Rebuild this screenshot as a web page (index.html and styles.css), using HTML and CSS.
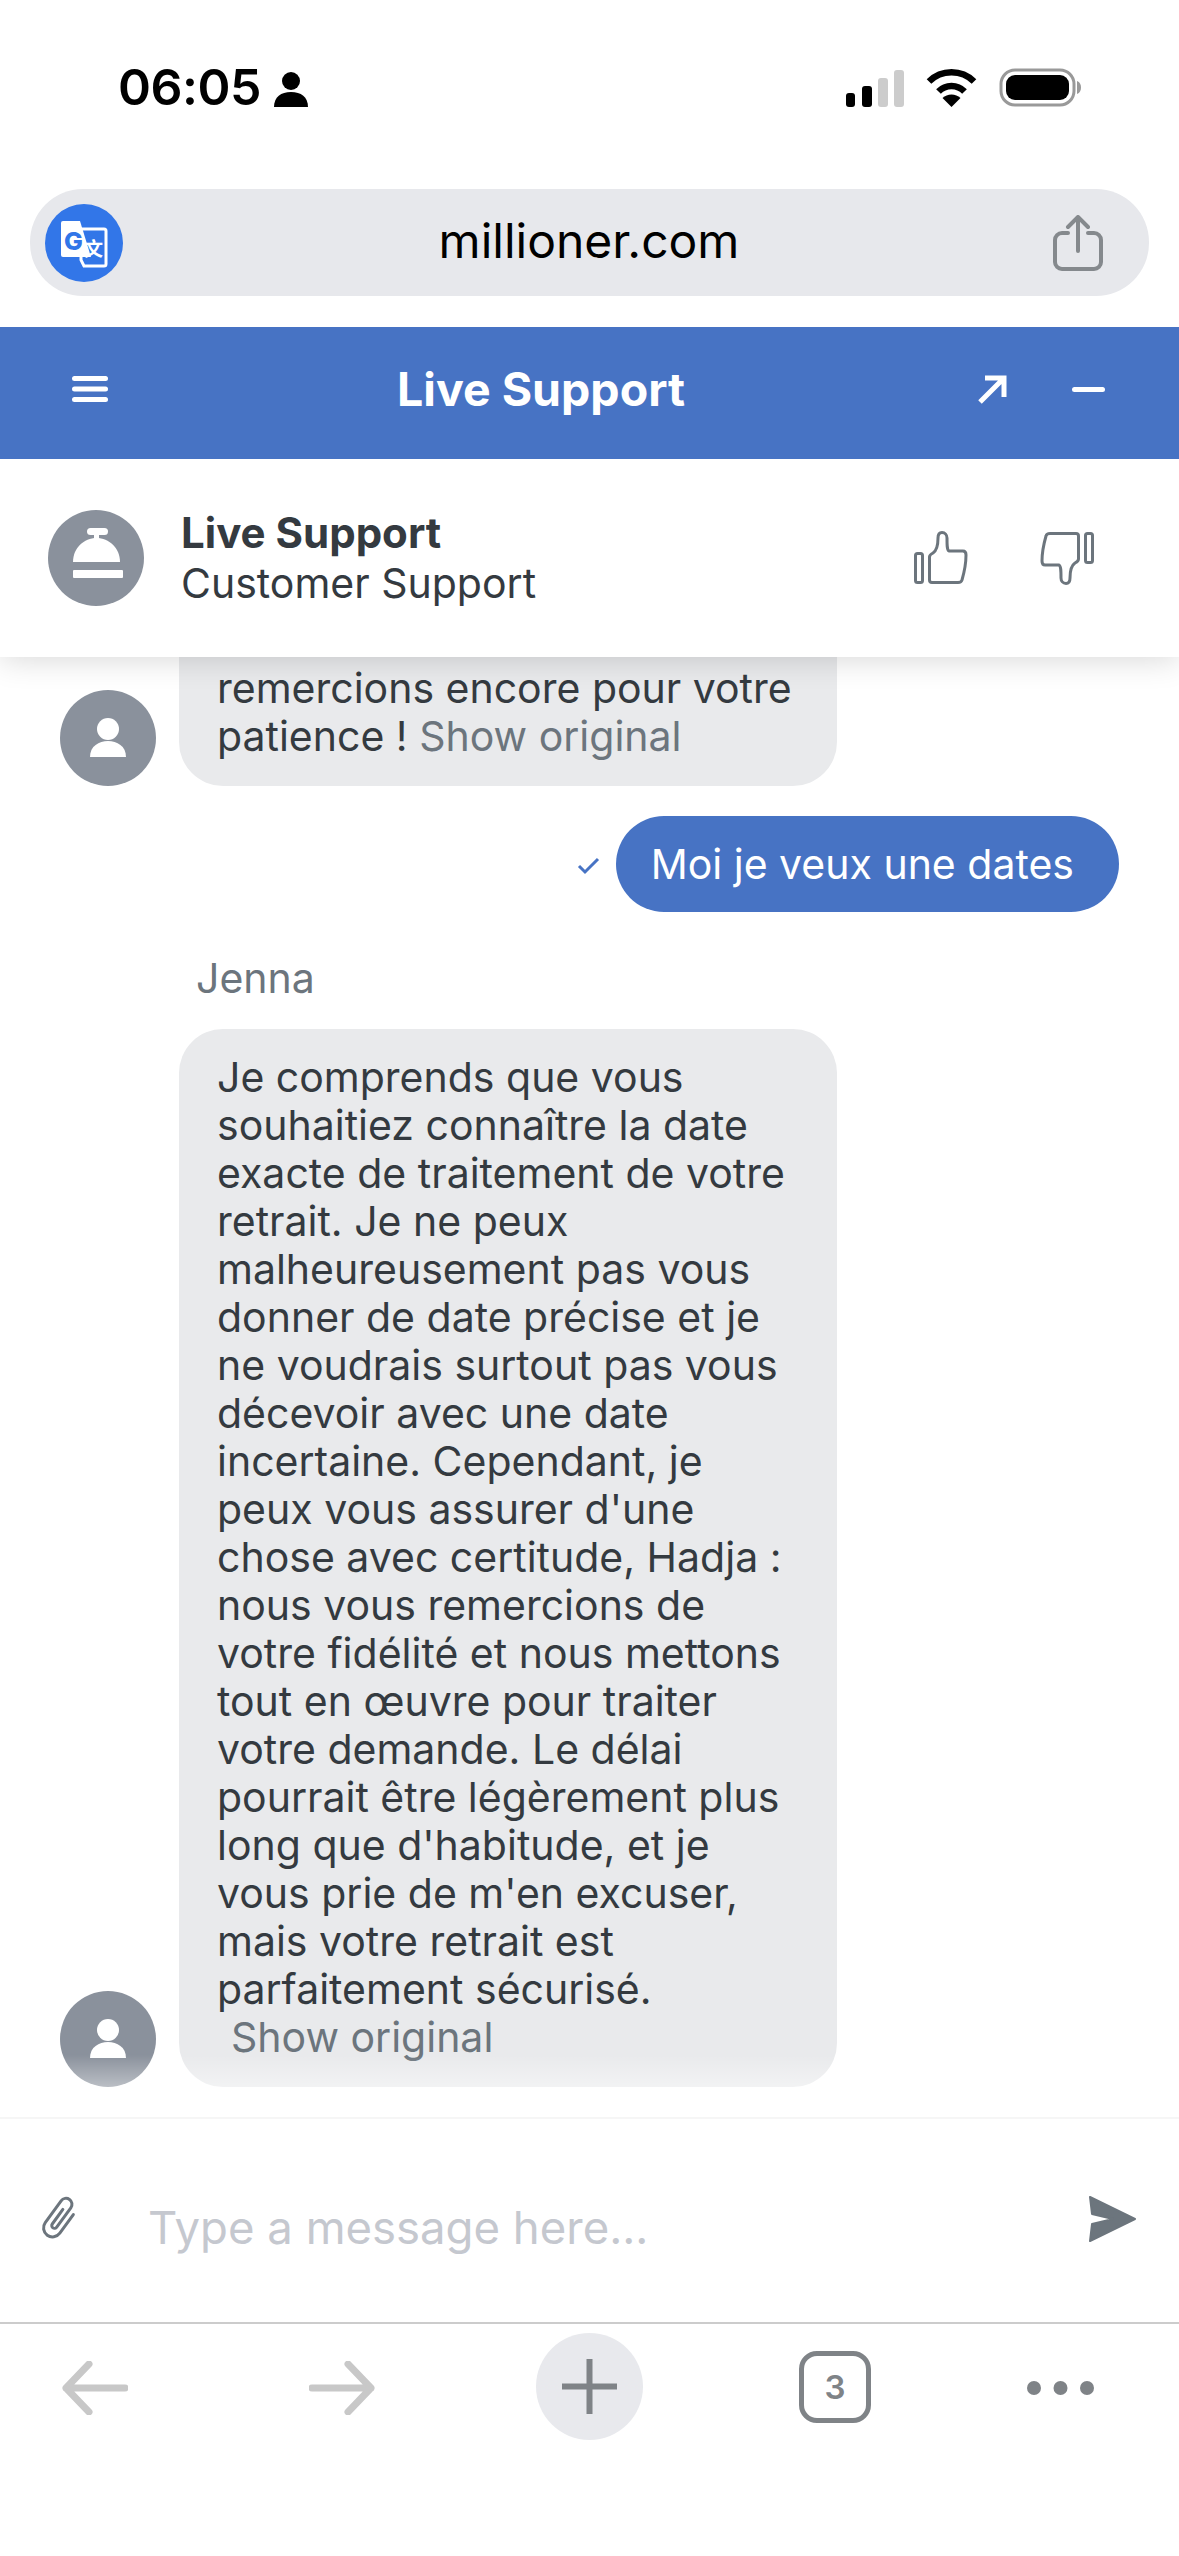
FILE: index.html
```html
<!doctype html>
<html lang="fr">
<head>
	<meta charset="UTF-8" />
	<title>Live Support - millioner.com</title>
	<link rel="stylesheet" href="styles.css">
</head>
<body>
<div class="page">

	<div class="status">
		<span class="time">06:05</span>
		<svg class="status-person" width="34" height="35" viewBox="0 0 34 35"><circle cx="17" cy="9" r="9"/><path d="M0 35c0-10 7-15 17-15s17 5 17 15z"/></svg>
		<svg class="signal" width="58" height="37" viewBox="0 0 58 37">
			<rect x="0" y="23" width="9" height="14" rx="3"/>
			<rect x="16" y="16" width="10" height="21" rx="3"/>
			<rect class="off" x="32" y="8" width="10" height="29" rx="3"/>
			<rect class="off" x="48" y="0" width="10" height="37" rx="3"/>
		</svg>
		<svg class="wifi" width="51" height="38" viewBox="0 0 51 38">
			<path class="arc" d="M3 12.500A32 32 0 0 1 48 12.500"/>
			<path class="arc" d="M12.500 22.500A18 18 0 0 1 38.500 22.500"/>
			<path d="M25.500 38L16.500 29A13 13 0 0 1 34.500 29z"/>
		</svg>
		<svg class="battery" width="82" height="39" viewBox="0 0 82 39">
			<rect class="shell" x="2" y="2" width="73" height="35" rx="14"/>
			<rect x="7" y="7" width="63" height="25" rx="9"/>
			<path class="nub" d="M78 13c3 1 4 4 4 6.500s-1 5.500-4 6.500z"/>
		</svg>
	</div>

	<div class="address">
		<div class="translate">
			<svg width="78" height="78" viewBox="0 0 78 78">
				<path class="doc-back" d="M36 25h23a2 2 0 0 1 2 2v33a2 2 0 0 1-2 2H39l-3-6z"/>
				<path class="doc-front" d="M18 17h17l11 36H18a2 2 0 0 1-2-2V19a2 2 0 0 1 2-2z"/>
				<text class="g-letter" x="19" y="46">G</text>
				<text class="wen-letter" x="39" y="52">文</text>
			</svg>
		</div>
		<span class="url">millioner.com</span>
		<svg class="share" width="50" height="56" viewBox="0 0 50 56">
			<path d="M15 18H9a7 7 0 0 0-7 7v22a7 7 0 0 0 7 7h32a7 7 0 0 0 7-7V25a7 7 0 0 0-7-7h-6"/>
			<path d="M25 36V3M15 12l10-10 10 10"/>
		</svg>
	</div>

	<div class="topbar">
		<svg class="burger" width="36" height="26" viewBox="0 0 36 26"><rect y="0" width="36" height="5" rx="2.500"/><rect y="10.500" width="36" height="5" rx="2.500"/><rect y="21" width="36" height="5" rx="2.500"/></svg>
		<span class="topbar-title">Live Support</span>
		<svg class="expand" width="30" height="30" viewBox="0 0 30 30"><path d="M3 27L27 3M8 3h19v19"/></svg>
		<svg class="minus" width="33" height="5" viewBox="0 0 33 5"><rect width="33" height="5" rx="2.500"/></svg>
	</div>

	<div class="contact">
		<div class="avatar">
			<svg width="96" height="96" viewBox="0 0 96 96">
				<rect x="39" y="18" width="21" height="7" rx="3.500"/>
				<rect x="46" y="24" width="5" height="6"/>
				<path d="M25 52C25 38 36 28 48.500 28S72 38 72 52z"/>
				<rect x="25" y="60" width="50" height="8" rx="1"/>
			</svg>
		</div>
		<div class="contact-text">
			<div class="contact-name">Live Support</div>
			<div class="contact-role">Customer Support</div>
		</div>
		<svg class="thumb" width="54" height="54" viewBox="0 0 54 54">
			<rect x="1.500" y="22.500" width="7" height="29" rx="2"/>
			<path d="M15.500 26C15.500 24 17 23 19 22C22 20 24 14 24 7C24 3 26 1.500 28 1.500C31 1.500 33 4 33 7C33 14 33 19 35 20L49 20C51 20 52 22 52 24C52 32 50 42 48 49C47.500 51 46 51.500 44 51.500L18 51.500C16 51.500 15.500 50.500 15.500 49z"/>
		</svg>
		<svg class="thumb thumb-down" width="54" height="54" viewBox="0 0 54 54">
			<g transform="rotate(180 27 27)">
				<rect x="1.500" y="22.500" width="7" height="29" rx="2"/>
				<path d="M15.500 26C15.500 24 17 23 19 22C22 20 24 14 24 7C24 3 26 1.500 28 1.500C31 1.500 33 4 33 7C33 14 33 19 35 20L49 20C51 20 52 22 52 24C52 32 50 42 48 49C47.500 51 46 51.500 44 51.500L18 51.500C16 51.500 15.500 50.500 15.500 49z"/>
			</g>
		</svg>
	</div>

	<div class="chat">
		<div class="row">
			<div class="avatar avatar-user">
				<svg width="96" height="96" viewBox="0 0 96 96"><circle cx="48" cy="39" r="11"/><path d="M30 67C30 56 39 51 48 51S66 56 66 67z"/></svg>
			</div>
			<div class="bubble bubble-clipped">
				remercions encore pour votre<br>
				patience ! <span class="original">Show original</span>
			</div>
		</div>

		<div class="row-me">
			<svg class="tick" width="23" height="18" viewBox="0 0 23 18"><path d="M2 9l6 6L21 2"/></svg>
			<div class="bubble-me">Moi je veux une dates</div>
		</div>

		<div class="sender">Jenna</div>

		<div class="row">
			<div class="avatar avatar-user">
				<svg width="96" height="96" viewBox="0 0 96 96"><circle cx="48" cy="39" r="11"/><path d="M30 67C30 56 39 51 48 51S66 56 66 67z"/></svg>
			</div>
			<div class="bubble">
				Je comprends que vous<br>
				souhaitiez connaître la date<br>
				exacte de traitement de votre<br>
				retrait. Je ne peux<br>
				malheureusement pas vous<br>
				donner de date précise et je<br>
				ne voudrais surtout pas vous<br>
				décevoir avec une date<br>
				incertaine. Cependant, je<br>
				peux vous assurer d'une<br>
				chose avec certitude, Hadja :<br>
				nous vous remercions de<br>
				votre fidélité et nous mettons<br>
				tout en œuvre pour traiter<br>
				votre demande. Le délai<br>
				pourrait être légèrement plus<br>
				long que d'habitude, et je<br>
				vous prie de m'en excuser,<br>
				mais votre retrait est<br>
				parfaitement sécurisé.<br>
				<span class="original original-block">Show original</span>
			</div>
		</div>
	</div>

	<div class="composer">
		<svg class="clip" width="42" height="46" viewBox="0 0 42 46">
			<g transform="rotate(36 21 23)">
				<path d="M30 11V34A9 9 0 0 1 12 34V7A6 6 0 0 1 24 7V31A2.700 2.700 0 0 1 18.500 31V13"/>
			</g>
		</svg>
		<span class="placeholder">Type a message here...</span>
		<svg class="send" width="49" height="48" viewBox="0 0 49 48"><path d="M2 2L47 24L2 46L4 29L25 24L4 19z"/></svg>
	</div>

	<div class="toolbar">
		<svg class="nav nav-back" width="66" height="54" viewBox="0 0 66 54"><path d="M63 27H4M27 3L4 27l23 24"/></svg>
		<svg class="nav nav-forward" width="66" height="54" viewBox="0 0 66 54"><path d="M3 27h59M39 3l23 24-23 24"/></svg>
		<div class="new-tab">
			<svg width="55" height="55" viewBox="0 0 55 55"><path d="M0 27.500h55M27.500 0v55"/></svg>
		</div>
		<div class="tabs">3</div>
		<svg class="more" width="67" height="14" viewBox="0 0 67 14"><circle cx="7" cy="7" r="7"/><circle cx="33.500" cy="7" r="7"/><circle cx="60" cy="7" r="7"/></svg>
	</div>

</div>
</body>
</html>
```
FILE: styles.css
```css
body{
	margin: 0;
	padding: 0;
	background: #fff;
	font-family: Inter, "Noto Sans", sans-serif;
	color: #343a40;
}
.page{
	display: flex;
	flex-direction: column;
	height: 2556px;
	overflow: hidden;
}

/* phone status bar */
.status{
	display: flex;
	align-items: center;
	height: 39px;
	margin-top: 68px;
	padding: 0 98px 0 118px;
	flex: none;
}
.time{
	font-size: 50px;
	font-weight: 600;
	color: #000;
	line-height: 39px;
	letter-spacing: -0.5px;
}
.status-person{
	margin-left: 13px;
	margin-top: 3px;
}
.signal{
	margin-left: auto;
	margin-top: 1px;
}
.signal .off{fill: #ccc;}
.wifi{margin-left: 22px;}
.wifi .arc{
	fill: none;
	stroke: #000;
	stroke-width: 6.5;
}
.battery{margin-left: 22px;}
.battery .shell{
	fill: none;
	stroke: #999;
	stroke-width: 3;
}
.battery .nub{fill: #999;}

/* browser address bar */
.address{
	display: flex;
	align-items: center;
	height: 107px;
	margin: 82px 30px 31px 30px;
	padding: 0 46px 0 15px;
	background: #e7e8ec;
	border-radius: 53px;
	flex: none;
}
.translate{
	width: 78px;
	height: 78px;
	background: #3276e8;
	border-radius: 50%;
}
.translate svg{display: block;}
.doc-back{
	fill: none;
	stroke: #fff;
	stroke-width: 3;
}
.doc-front{fill: #fff;}
.g-letter{
	font-size: 25px;
	font-weight: 800;
	fill: #3276e8;
}
.wen-letter{
	font-family: "Noto Sans CJK SC", sans-serif;
	font-size: 19px;
	font-weight: 700;
	fill: #fff;
}
.url{
	flex: 1;
	margin: 0 0 3px 2px;
	text-align: center;
	font-size: 48px;
	line-height: 60px;
	color: #000;
}
.share{
	fill: none;
	stroke: #85898d;
	stroke-width: 4;
	stroke-linecap: round;
	stroke-linejoin: round;
}

/* blue chat header */
.topbar{
	position: relative;
	z-index: 3;
	display: flex;
	align-items: center;
	height: 132px;
	padding: 0 74px 8px 72px;
	box-sizing: border-box;
	background: #4773c4;
	flex: none;
}
.burger{fill: #fff;}
.topbar-title{
	margin-left: 289px;
	font-size: 46.5px;
	font-weight: 700;
	line-height: 56px;
	color: #fff;
}
.expand{
	margin: 2px 0 0 auto;
	fill: none;
	stroke: #fff;
	stroke-width: 5;
}
.minus{
	margin-left: 65px;
	fill: #fff;
}

/* agent row */
.contact{
	position: relative;
	z-index: 2;
	display: flex;
	align-items: center;
	height: 198px;
	padding: 0 85px 0 48px;
	box-sizing: border-box;
	background: #fff;
	box-shadow: 0 2px 30px rgba(0, 0, 0, 0.16);
	flex: none;
}
.avatar{
	width: 96px;
	height: 96px;
	background: #8a919c;
	border-radius: 50%;
	flex: none;
}
.avatar svg{
	display: block;
	fill: #fff;
}
.contact-text{
	margin-left: 37px;
	line-height: 51px;
}
.contact-name{
	font-size: 42px;
	font-weight: 700;
}
.contact-role{font-size: 41px;}
.thumb{
	fill: none;
	stroke: #6c757d;
	stroke-width: 3;
	margin-left: auto;
}
.thumb-down{margin-left: 72px;}

/* messages */
.chat{
	position: relative;
	flex: 1;
	min-height: 0;
	display: flex;
	flex-direction: column;
	justify-content: flex-end;
	padding-bottom: 30px;
	box-sizing: border-box;
	border-bottom: 2px solid #f6f6f6;
	font-size: 41px;
	line-height: 48px;
	overflow: hidden;
}
.chat::after{
	content: "";
	position: absolute;
	left: 0;
	right: 0;
	bottom: 0;
	height: 62px;
	background: linear-gradient(rgba(255, 255, 255, 0), rgba(255, 255, 255, 0.4) 50%, #fff);
}
.row{
	display: flex;
	align-items: flex-end;
	gap: 23px;
	padding-left: 60px;
	flex: none;
}
.bubble{
	width: 658px;
	box-sizing: border-box;
	padding: 24px 20px 26px 38px;
	background: #e9eaec;
	border-radius: 44px;
	white-space: nowrap;
}
.bubble-clipped{
	padding-top: 60px;
	border-radius: 0 0 44px 44px;
}
.original{color: #6c757d;}
.original-block{margin-left: 14px;}
.row-me{
	display: flex;
	align-items: center;
	justify-content: flex-end;
	gap: 16px;
	margin-top: 30px;
	padding-right: 60px;
	flex: none;
}
.tick{
	fill: none;
	stroke: #4773c4;
	stroke-width: 3;
	margin-top: 4px;
}
.bubble-me{
	height: 96px;
	padding: 0 45px 0 35px;
	background: #4773c4;
	color: #fff;
	border-radius: 48px;
	line-height: 96px;
}
.sender{
	margin: 42px 0 27px 196px;
	color: #6c757d;
	flex: none;
}

/* message input */
.composer{
	display: flex;
	align-items: center;
	height: 203px;
	padding: 0 42px 4px 38px;
	box-sizing: border-box;
	flex: none;
}
.clip{
	fill: none;
	stroke: #6c757d;
	stroke-width: 3;
	stroke-linecap: round;
	flex: none;
}
.placeholder{
	margin-left: 68px;
	margin-top: 18px;
	font-size: 45.5px;
	line-height: 56px;
	color: #c5c8cf;
}
.send{
	margin-left: auto;
	fill: #6c757d;
	stroke: #6c757d;
	stroke-width: 2;
	stroke-linejoin: round;
}

/* browser toolbar */
.toolbar{
	display: flex;
	align-items: flex-start;
	height: 234px;
	box-sizing: border-box;
	padding-left: 62px;
	border-top: 2px solid #ccc;
	flex: none;
}
.nav{
	fill: none;
	stroke: #c8c8c8;
	stroke-width: 7;
	stroke-linecap: round;
	stroke-linejoin: round;
	margin-top: 37px;
}
.nav-forward{margin-left: 181px;}
.new-tab{
	display: flex;
	align-items: center;
	justify-content: center;
	width: 107px;
	height: 107px;
	margin: 9px 0 0 161px;
	background: #e8e9ed;
	border-radius: 50%;
}
.new-tab svg{
	fill: none;
	stroke: #7f8387;
	stroke-width: 6;
	stroke-linecap: round;
}
.tabs{
	width: 72px;
	height: 72px;
	margin: 27px 0 0 156px;
	box-sizing: border-box;
	border: 5px solid #7f8387;
	border-radius: 18px;
	text-align: center;
	font-size: 33px;
	font-weight: 600;
	line-height: 62px;
	color: #7f8387;
}
.more{
	margin: 57px 0 0 156px;
	fill: #7f8387;
}
```
